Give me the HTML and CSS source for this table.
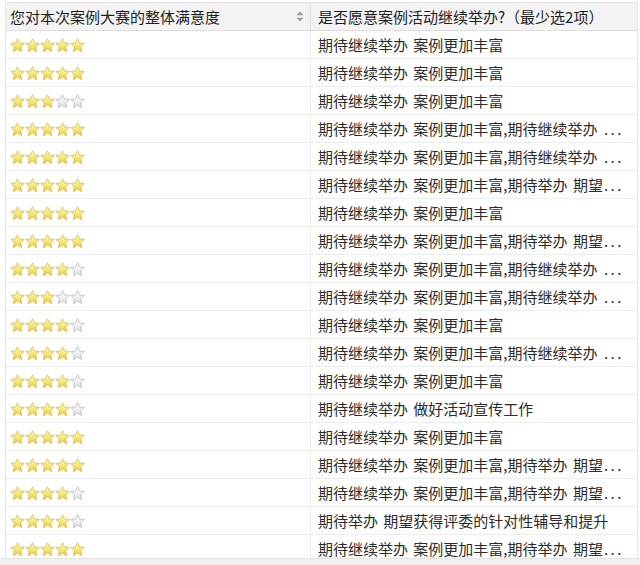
FILE: index.html
```html
<!DOCTYPE html>
<html lang="zh">
<head>
<meta charset="utf-8">
<link rel="stylesheet" href="styles.css">
</head>
<body>
<svg class="defs" width="0" height="0" aria-hidden="true">
  <defs>
    <linearGradient id="gold" x1="0" y1="0" x2="0" y2="1">
      <stop offset="0" stop-color="#fffce0"/>
      <stop offset="0.5" stop-color="#f8e878"/>
      <stop offset="1" stop-color="#ecca3a"/>
    </linearGradient>
    <linearGradient id="grey" x1="0" y1="0" x2="0" y2="1">
      <stop offset="0" stop-color="#ffffff"/>
      <stop offset="1" stop-color="#e2e2e6"/>
    </linearGradient>
    <symbol id="star" viewBox="0 0 16 16">
      <path d="M8 0.8 L10.1 5.3 L15.2 5.8 L11.3 9.2 L12.5 14.6 L8 11.8 L3.5 14.6 L4.7 9.2 L0.8 5.8 L5.9 5.3 Z"/>
    </symbol>
  </defs>
</svg>
<div class="page">
  <div class="table">
    <div class="head">
      <div class="hcell left">您对本次案例大赛的整体满意度<span class="sort"><svg width="8" height="11" viewBox="0 0 8 11"><path d="M4 0.5 L7.5 4.2 H0.5 Z M4 10.5 L7.5 6.8 H0.5 Z" fill="#9a9a9a"/></svg></span></div>
      <div class="hcell right">是否愿意案例活动继续举办?（最少选2项）</div>
    </div>
    <div class="body" id="rows"></div>
  </div>
  <div class="scrollbar"></div>
</div>
<script>
var A = "期待继续举办 案例更加丰富";
var B = "期待继续举办 案例更加丰富,期待继续举办 ";
var C = "期待继续举办 案例更加丰富,期待举办 期望";
var data = [
 [5,A,0],[5,A,0],[3,A,0],[5,B,1],[5,B,1],[5,C,1],[5,A,0],[5,C,1],[4,B,1],[3,B,1],
 [4,A,0],[4,B,1],[4,A,0],[4,"期待继续举办 做好活动宣传工作",0],[5,A,0],[5,C,1],[4,C,1],
 [4,"期待举办 期望获得评委的针对性辅导和提升",0],[5,C,1]
];
var html = "";
data.forEach(function(r){
  var stars = "";
  for (var i = 0; i < 5; i++) {
    stars += '<svg class="star ' + (i < r[0] ? 'on' : 'off') + '" width="15" height="15"><use href="#star"/></svg>';
  }
  html += '<div class="row"><div class="cell left"><span class="stars">' + stars + '</span></div><div class="cell right"><span class="txt">' + r[1] + (r[2] ? '<span class="dots">...</span>' : '') + '</span></div></div>';
});
document.getElementById("rows").innerHTML = html;
</script>
</body>
</html>
```

FILE: styles.css
```css
html, body {
  margin: 0;
  padding: 0;
  background: #ffffff;
}
.defs {
  position: absolute;
  width: 0;
  height: 0;
}
.page {
  width: 640px;
  height: 565px;
  overflow: hidden;
  display: flex;
  flex-direction: column;
  font-family: "Noto Sans CJK SC", "Noto Sans", sans-serif;
}
.table {
  height: 558px;
  overflow: hidden;
  margin-left: 5px;
  width: 633px;
  border-left: 1px solid #e6e6e6;
  border-right: 1px solid #e6e6e6;
  box-sizing: border-box;
  padding-top: 2px;
}
.head {
  display: grid;
  grid-template-columns: 305px 1fr;
  height: 29px;
  background: #f3f3f4;
  border-top: 1px solid #e4e4e4;
  border-bottom: 1px solid #dedede;
  box-sizing: border-box;
}
.hcell {
  display: flex;
  align-items: center;
  font-size: 15px;
  color: #1e1e1e;
  line-height: 1;
  white-space: nowrap;
  padding-bottom: 1px;
}
.hcell.left {
  padding-left: 4px;
  border-right: 1px solid #e2e2e2;
  position: relative;
}
.hcell.right {
  padding-left: 7px;
}
.sort {
  position: absolute;
  right: 6px;
  top: 8px;
  display: flex;
}
.row {
  display: grid;
  grid-template-columns: 305px 1fr;
  height: 28px;
  border-bottom: 1px solid #ececec;
  box-sizing: border-box;
}
.cell {
  display: flex;
  align-items: center;
  min-width: 0;
}
.cell.left {
  padding-left: 4px;
  border-right: 1px solid #ececec;
}
.cell.right {
  padding-left: 7px;
  padding-right: 2px;
}
.stars {
  display: flex;
  margin-top: 2px;
}
.star {
  display: block;
}
.star.on {
  fill: url(#gold);
  stroke: #d6b63a;
  stroke-width: 0.8;
  stroke-linejoin: round;
}
.star.off {
  fill: url(#grey);
  stroke: #b4b4ba;
  stroke-width: 0.8;
  stroke-linejoin: round;
}
.txt {
  font-size: 15px;
  color: #2c2c2c;
  white-space: nowrap;
  overflow: hidden;
  word-spacing: 2px;
  display: block;
  min-width: 0;
}
.dots {
  letter-spacing: 2.5px;
  margin-left: 1px;
}
.scrollbar {
  flex: 1;
  background: #f1f1f1;
  border-top: 1px solid #e2e2e2;
}
```
